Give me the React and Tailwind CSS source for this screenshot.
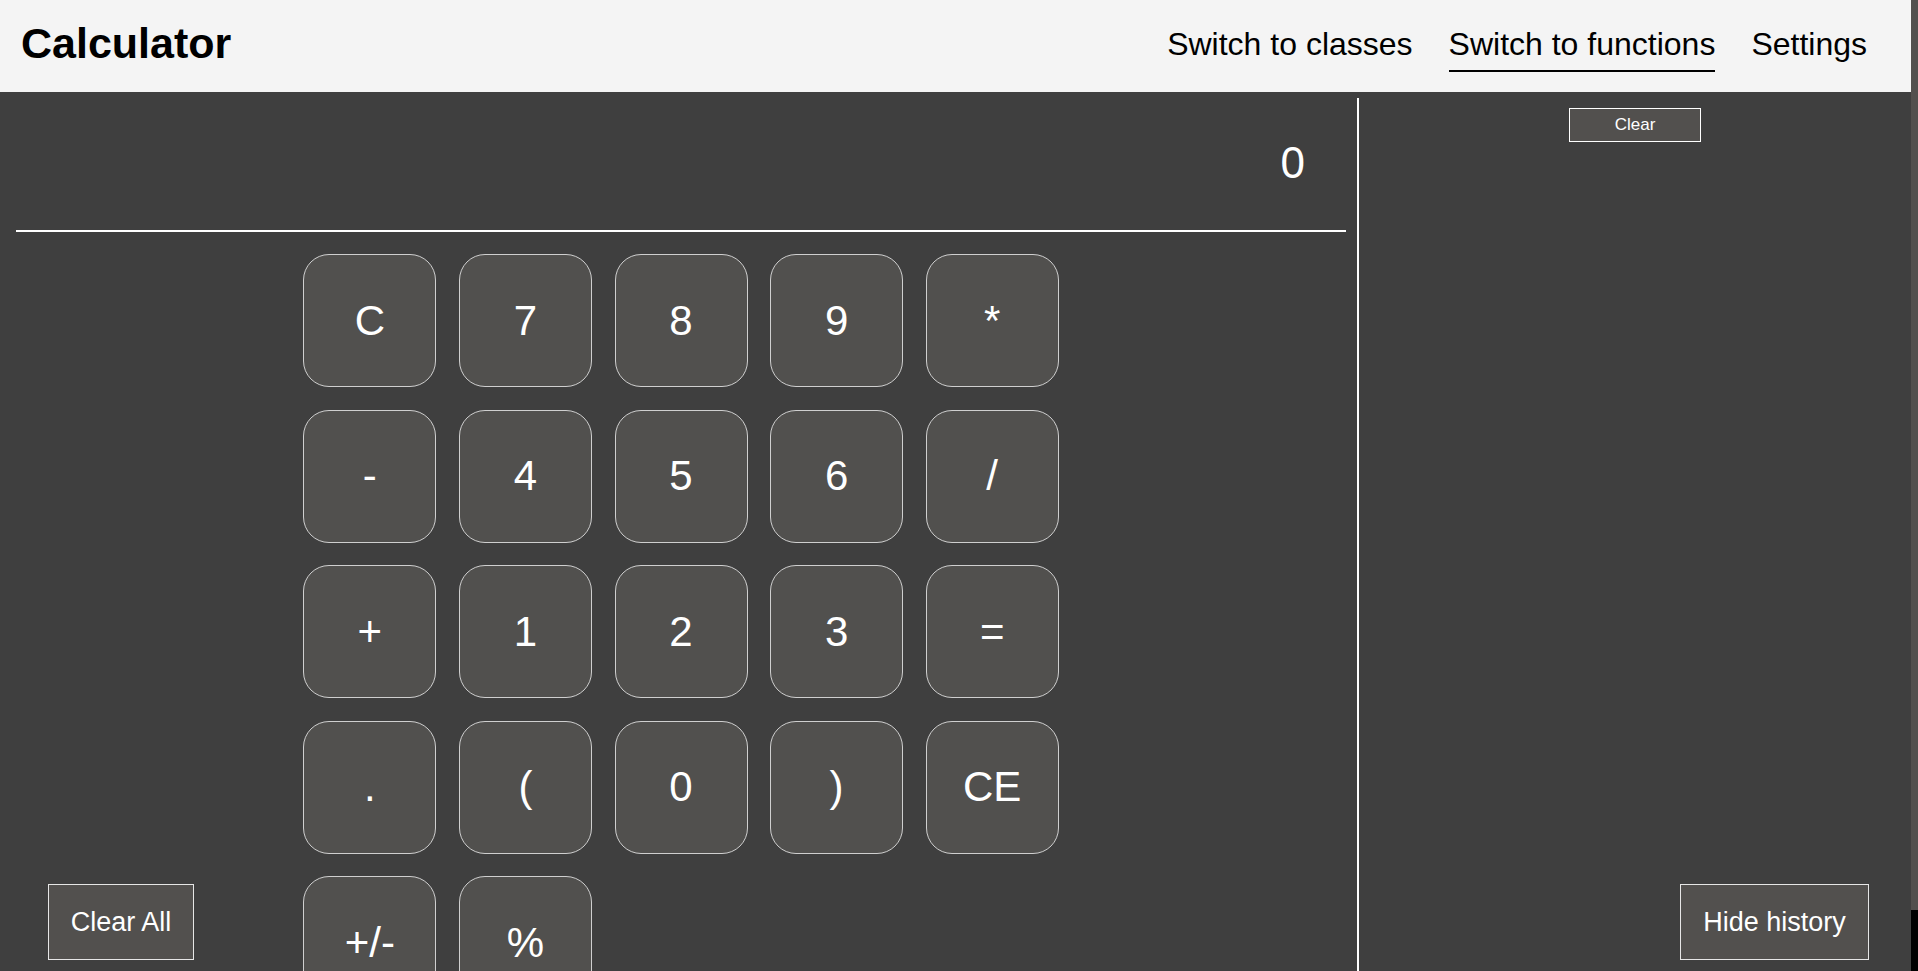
import React from "react";

const keys = [
  "C", "7", "8", "9", "*",
  "-", "4", "5", "6", "/",
  "+", "1", "2", "3", "=",
  ".", "(", "0", ")", "CE",
  "+/-", "%",
];

export default function App() {
  return (
    <div className="flex h-[971px] w-full overflow-hidden bg-[#3f3f3f] font-['Liberation_Sans',Arial,sans-serif]">
      <div className="relative flex min-w-0 flex-1 flex-col">
        <header className="flex h-[92px] shrink-0 items-center justify-between bg-[#f4f4f4] pl-[21px] pr-[44px] text-black">
          <h1 className="pb-[5px] text-[43px] font-bold leading-normal">Calculator</h1>
          <nav className="flex items-center gap-[36px] text-[32px] leading-normal">
            <a className="border-b-2 border-transparent pb-[2px]">Switch to classes</a>
            <a className="border-b-2 border-black pb-[2px]">Switch to functions</a>
            <a className="border-b-2 border-transparent pb-[2px]">Settings</a>
          </nav>
        </header>
        <main className="flex min-h-0 flex-1">
          <section className="flex w-[1357px] shrink-0 flex-col">
            <div className="ml-[16px] mr-[11px] flex h-[140px] shrink-0 items-center justify-end border-b-2 border-white pr-[41px] pt-[4px] text-[44px] leading-normal text-white">
              0
            </div>
            <div className="ml-[16px] mr-[11px] flex shrink-0 justify-center pt-[22px]">
              <div className="grid grid-cols-[repeat(5,133px)] gap-[22.6px]">
                {keys.map((k) => (
                  <button
                    key={k}
                    className="flex h-[133px] w-[133px] items-center justify-center rounded-[26px] border border-[#cfcfcf] bg-[#51504e] text-[42px] leading-none text-white"
                  >
                    {k}
                  </button>
                ))}
              </div>
            </div>
          </section>
          <aside className="mt-[6px] flex flex-1 flex-col items-center border-l-2 border-white pt-[10px]">
            <button className="flex h-[34px] w-[132px] items-center justify-center border border-white bg-[#52504e] text-[17px] text-white">
              Clear
            </button>
          </aside>
        </main>
        <button className="absolute bottom-[11px] left-[48px] flex h-[76px] w-[146px] items-center justify-center border border-[#e6e6e6] bg-[#52504e] text-[27px] text-white">
          Clear All
        </button>
        <button className="absolute bottom-[11px] right-[42px] flex h-[76px] w-[189px] items-center justify-center border border-[#e6e6e6] bg-[#52504e] text-[27px] text-white">
          Hide history
        </button>
      </div>
      <div className="flex w-[7px] shrink-0 flex-col justify-end bg-[#52504e]">
        <div className="h-[61px] bg-black" />
      </div>
    </div>
  );
}
